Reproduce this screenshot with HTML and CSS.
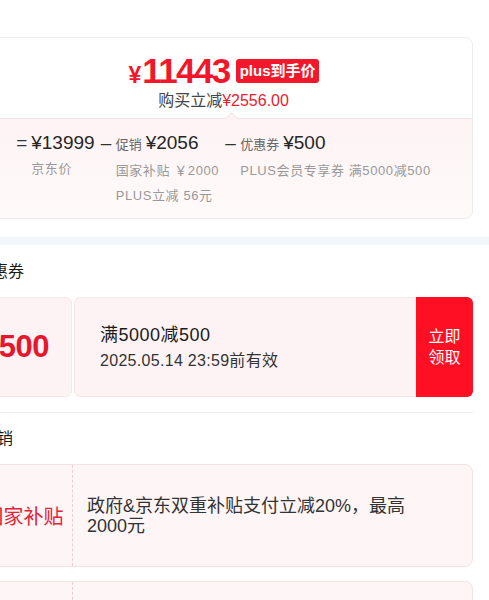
FILE: index.html
```html
<!DOCTYPE html>
<html lang="zh-CN">
<head>
<meta charset="utf-8">
<title>价格详情</title>
<link rel="stylesheet" href="styles.css">
</head>
<body>
<div class="page">
  <section class="price-card">
    <div class="price-head">
      <div class="price-row">
        <span class="yen">¥</span><span class="big">11443</span><span class="badge">plus到手价</span>
      </div>
      <div class="save">购买立减<span class="save-amt">¥2556.00</span></div>
      <i class="notch"></i>
    </div>
    <div class="price-detail">
      <div class="col">
        <span class="sign">=</span>
        <div class="stack">
          <div class="amt">¥13999</div>
          <div class="sub">京东价</div>
        </div>
      </div>
      <div class="col">
        <span class="sign">–</span>
        <div class="stack">
          <div class="amt"><span class="lbl">促销</span>¥2056</div>
          <div class="sub">国家补贴 ￥2000</div>
          <div class="sub">PLUS立减 56元</div>
        </div>
      </div>
      <div class="col">
        <span class="sign">–</span>
        <div class="stack">
          <div class="amt"><span class="lbl">优惠券</span>¥500</div>
          <div class="sub">PLUS会员专享券 满5000减500</div>
        </div>
      </div>
    </div>
  </section>

  <div class="band"></div>

  <section class="block">
    <h2 class="block-title">优惠券</h2>
    <div class="coupon">
      <div class="c-left"><span class="c-yen">¥</span><span class="c-num">500</span></div>
      <div class="c-mid">
        <div class="c-name">满5000减500</div>
        <div class="c-date">2025.05.14 23:59前有效</div>
      </div>
      <div class="c-btn">立即<br>领取</div>
    </div>
  </section>

  <section class="block last">
    <h2 class="block-title">促销</h2>
    <div class="promo">
      <div class="p-label">国家补贴</div>
      <div class="p-text">政府&amp;京东双重补贴支付立减20%，最高2000元</div>
    </div>
    <div class="promo">
      <div class="p-label">PLUS立减</div>
      <div class="p-text">PLUS会员专享立减56元</div>
    </div>
  </section>
</div>
</body>
</html>
```

FILE: styles.css
```css
html, body {
  margin: 0;
  padding: 0;
  background: #ffffff;
  overflow: hidden;
}

body {
  font-family: "Liberation Sans", "Noto Sans CJK SC", sans-serif;
  color: #1a1a1a;
}

.page {
  width: 531px;
  margin-left: -42px;
  padding-top: 37px;
}

/* ---------- price card ---------- */
.price-card {
  margin: 0 16px;
  border: 1px solid #ececec;
  border-radius: 8px;
  overflow: hidden;
}

.price-head {
  position: relative;
  padding: 13px 0 7px;
  border-bottom: 1px solid #f3e5e7;
  display: flex;
  flex-direction: column;
  align-items: center;
}

.price-row {
  display: flex;
  align-items: center;
  height: 40px;
  color: #f2162b;
  font-weight: bold;
}

.yen {
  font-size: 23px;
  margin-top: 8px;
  margin-right: 1px;
}

.big {
  font-size: 35px;
  letter-spacing: -1.6px;
  line-height: 40px;
}

.badge {
  margin-left: 6px;
  background: #f2182c;
  color: #ffffff;
  font-size: 15px;
  line-height: 24px;
  padding: 0 3px 0 4px;
  border-radius: 3px;
}

.save {
  font-size: 16px;
  line-height: 20px;
  color: #444444;
}

.save-amt {
  color: #e8212f;
}

.notch {
  position: absolute;
  left: calc(50% + 3px);
  bottom: -5px;
  width: 8px;
  height: 8px;
  background: #fdf3f4;
  border-top: 1px solid #f3e5e7;
  border-left: 1px solid #f3e5e7;
  transform: rotate(45deg);
}

.price-detail {
  display: flex;
  justify-content: center;
  gap: 6px;
  padding: 11px 0 10px;
  background: linear-gradient(180deg, #fdf3f4 0%, #fffafa 100%);
}

.col {
  display: flex;
  align-items: flex-start;
}

.sign {
  width: 10px;
  margin-right: 5px;
  font-size: 19px;
  line-height: 26px;
  color: #333333;
  text-align: center;
}

.amt {
  font-size: 19px;
  line-height: 26px;
  color: #262626;
  white-space: nowrap;
}

.lbl {
  font-size: 13px;
  color: #666666;
  margin-right: 4px;
}

.sub {
  font-size: 13px;
  line-height: 25px;
  letter-spacing: 0.6px;
  color: #999999;
  white-space: nowrap;
}

/* ---------- band ---------- */
.band {
  height: 8px;
  margin-top: 18px;
  background: #f3f6fa;
}

/* ---------- blocks ---------- */
.block {
  margin: 0 16px;
  padding-bottom: 15px;
  border-bottom: 1px solid #eeeeee;
}

.block.last {
  border-bottom: none;
}

.block-title {
  margin: 0;
  padding: 15px 0 0 2px;
  font-size: 16px;
  line-height: 24px;
  font-weight: normal;
  color: #1a1a1a;
}

.block.last .block-title {
  padding-top: 14px;
  padding-left: 7px;
}

/* ---------- coupon ---------- */
.coupon {
  display: flex;
  height: 100px;
  margin-top: 13px;
}

.c-left {
  width: 98px;
  box-sizing: border-box;
  background: #fdf3f4;
  border: 1px solid #f6e7e9;
  border-radius: 6px;
  display: flex;
  align-items: baseline;
  justify-content: flex-end;
  padding: 31px 22px 0 0;
  color: #e8162c;
  font-weight: bold;
}

.c-yen {
  font-size: 16px;
  margin-right: 2px;
}

.c-num {
  font-size: 31px;
  letter-spacing: -0.5px;
}

.c-mid {
  flex: 1;
  margin-left: 2px;
  background: #fdf3f4;
  border: 1px solid #f6e7e9;
  border-right: none;
  border-radius: 6px 0 0 6px;
  padding-left: 25px;
  display: flex;
  flex-direction: column;
  justify-content: center;
}

.c-name {
  font-size: 18px;
  line-height: 24px;
  letter-spacing: 0.5px;
  color: #1a1a1a;
}

.c-date {
  margin-top: 3px;
  font-size: 16px;
  line-height: 22px;
  letter-spacing: 0.3px;
  color: #333333;
}

.c-btn {
  width: 57px;
  background: #ff0f23;
  border-radius: 0 6px 6px 0;
  color: #ffffff;
  font-size: 16px;
  line-height: 21px;
  display: flex;
  align-items: center;
  justify-content: center;
  text-align: center;
}

/* ---------- promo ---------- */
.promo {
  display: flex;
  min-height: 103px;
  box-sizing: border-box;
  margin-top: 13px;
  background: #fdf5f6;
  border: 1px solid #f3e2e5;
  border-radius: 8px;
}

.promo + .promo {
  margin-top: 14px;
}

.p-label {
  width: 97px;
  flex-shrink: 0;
  border-right: 1px dashed #e8d0d4;
  display: flex;
  align-items: center;
  justify-content: center;
  font-size: 20px;
  color: #e2233a;
  white-space: nowrap;
}

.p-text {
  flex: 1;
  padding: 0 40px 0 14px;
  display: flex;
  align-items: center;
  font-size: 18px;
  line-height: 20px;
  color: #333333;
}
```
